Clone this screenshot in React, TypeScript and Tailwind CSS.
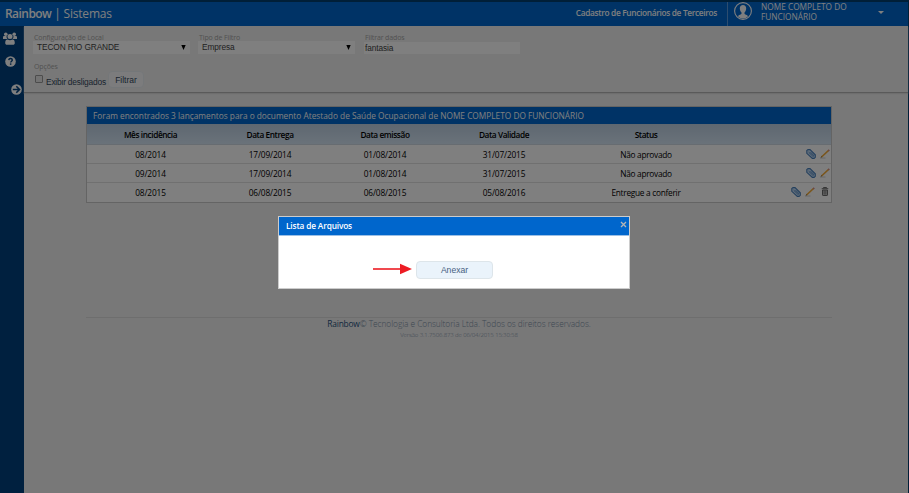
import React from "react";

const open = "font-['Open_Sans',sans-serif]";
const arial = "font-['Liberation_Sans',Arial,sans-serif]";
const label = "pl-[1px] text-[7px] leading-[10px] tracking-[-0.12px] text-[#a4a4a4]";

function UsersIcon() {
  return (
    <svg width="14" height="13" viewBox="0 0 14 13" fill="#fff" className="block">
      <circle cx="2.8" cy="2.2" r="1.8" />
      <circle cx="11.2" cy="2.2" r="1.8" />
      <path d="M0 7V5.2C0 4.3.6 4 1.2 4h2.4C3.4 5.4 3.800 6.300 4.600 7zM14 7V5.200C14 4.300 13.400 4 12.800 4h-2.400c.2 1.400-.2 2.300-1 3z" />
      <circle cx="7" cy="4.600" r="2.500" />
      <path d="M2.200 11c0-2.500.8-3.500 2.400-3.500.8.600 1.500.8 2.400.8s1.600-.2 2.400-.8c1.600 0 2.400 1 2.400 3.500 0 1.200-.7 1.800-1.800 1.800H4c-1.100 0-1.800-.6-1.800-1.800z" />
    </svg>
  );
}

function HelpIcon() {
  return (
    <svg width="11" height="11" viewBox="0 0 11 11" className="block">
      <circle cx="5.500" cy="5.500" r="5.300" fill="#fff" />
      <path d="M3.700 4.100C3.900 2.900 4.600 2.500 5.500 2.500c1 0 1.800.6 1.800 1.500 0 1.200-1.600 1.200-1.600 2.500" fill="none" stroke="#00407f" strokeWidth="1.400" />
      <rect x="4.900" y="7.400" width="1.500" height="1.400" fill="#00407f" />
    </svg>
  );
}

function ArrowIcon() {
  return (
    <svg width="11" height="11" viewBox="0 0 11 11" className="block">
      <circle cx="5.500" cy="5.500" r="5.300" fill="#fff" />
      <path d="M1.800 5.500h6.400M5.300 2.300l3.200 3.200-3.200 3.200" fill="none" stroke="#00407f" strokeWidth="1.600" />
    </svg>
  );
}

function UserIcon() {
  return (
    <svg width="18" height="18" viewBox="0 0 18 18" className="block shrink-0">
      <circle cx="9" cy="9" r="8.400" fill="none" stroke="#fff" strokeWidth="1.100" />
      <path d="M9 2.900c2 0 3.200 1.400 3.200 3.400 0 1.900-.8 3.300-1.700 4.100v1.400c0 .7 2.900 1.100 3.500 2.400-1.400 1.500-3 2.200-5 2.200s-3.600-.7-5-2.200c.6-1.300 3.500-1.700 3.500-2.400v-1.400C6.600 9.600 5.800 8.200 5.800 6.300c0-2 1.200-3.400 3.200-3.400z" fill="#fff" />
    </svg>
  );
}

function ClipIcon() {
  return (
    <svg width="10" height="10" viewBox="0 0 10 10" fill="none" className="block">
      <path d="M.8 3V1.500L2 .6h2l5.300 5.200v2.500L8.100 9.400H6.300L.8 4.300z" fill="#c2dbf5" stroke="#4a80bb" strokeWidth="1.100" />
      <path d="M2.700 3.200 6.600 7c.8.700 1.500-.1.900-.8L4.600 3.200" stroke="#4a80bb" strokeWidth=".9" />
    </svg>
  );
}

function PencilIcon() {
  return (
    <svg width="10" height="10" viewBox="0 0 10 10" className="block">
      <path d="M1 9h4.500" stroke="#c4c4c4" strokeWidth=".8" />
      <path d="M1.500 8 8.500 1.500" stroke="#f5ac38" strokeWidth="1.700" />
      <path d="m8.200 1.800 1.100-1" stroke="#d98a80" strokeWidth="1.600" />
      <path d="m.6 8.800 1.200-1.100" stroke="#6b5a3d" />
    </svg>
  );
}

function TrashIcon() {
  return (
    <svg width="8" height="9" viewBox="0 0 8 9" className="block">
      <path d="M2.500 1.200V.5h3v.7M.7 1.700h6.600" stroke="#5c5c5c" strokeWidth=".9" fill="none" />
      <path d="M1.500 3v4.900c0 .4.200.6.600.6h3.800c.4 0 .6-.2.600-.6V3z" fill="#c4c4c4" stroke="#5c5c5c" strokeWidth=".9" />
      <path d="M3.200 3.500v4M4.800 3.500v4" stroke="#6a6a6a" strokeWidth=".7" />
    </svg>
  );
}

function Select({ value }: { value: string }) {
  return (
    <div className={`${arial} flex h-[13px] w-[157px] items-center justify-between bg-white pl-1 pr-1 text-[8.3px] leading-[13px] tracking-[-0.1px] text-[#444]`}>
      <span>{value}</span>
      <svg width="5" height="5" viewBox="0 0 5 5"><path d="M.3 0h4.400L2.500 5z" fill="#000" /></svg>
    </div>
  );
}

const columns = "grid grid-cols-[127px_112px_118px_120px_164px_104px]";

const rows = [
  ["08/2014", "17/09/2014", "01/08/2014", "31/07/2015", "Não aprovado"],
  ["09/2014", "17/09/2014", "01/08/2014", "31/07/2015", "Não aprovado"],
  ["08/2015", "06/08/2015", "06/08/2015", "05/08/2016", "Entregue a conferir"],
];

export default function App() {
  return (
    <div className={`${open} relative h-[493px] w-[909px] overflow-hidden bg-[#f1f1f1]`}>
      <header className="flex h-[26px] border-t-2 border-r border-t-[#003e70] border-r-[#003e70] bg-[#0066cc] text-white">
        <div className="flex w-[560px] items-center pl-[5px] text-[12px] leading-5 tracking-[-0.2px] whitespace-pre">
          <span className="font-semibold tracking-[-0.55px]">Rainbow</span>
          <span> | </span>
          <span>Sistemas</span>
        </div>
        <div className="w-[167px] pr-[10px] text-right text-[8.3px] leading-[21px] font-semibold tracking-[-0.32px] whitespace-nowrap">
          Cadastro de Funcionários de Terceiros
        </div>
        <div className="flex flex-1 border-l border-[#5a9ade] pl-[6px]">
          <UserIcon />
          <div className="ml-[9px] w-[110px] text-[8.3px] leading-[10px]">NOME COMPLETO DO FUNCIONÁRIO</div>
          <svg width="6" height="3" viewBox="0 0 6 3" className="mt-[9px] ml-[7px]"><path d="M0 0h6L3 3z" fill="#fff" /></svg>
        </div>
      </header>

      <div className="flex h-[467px]">
        <aside className="w-6 bg-[#00407f]">
          <div className="pt-[6px] pl-[3px]"><UsersIcon /></div>
          <div className="pt-[11px] pl-[5px]"><HelpIcon /></div>
          <div className="pt-[17px] pl-[10.5px]"><ArrowIcon /></div>
        </aside>

        <main className="flex-1 border-r border-[#003e70]">
          <section className="h-[67px] border-b border-[#b5b5b5] pt-[7px] pl-[9px] shadow-[0_1px_1px_#ddd]">
            <div className="flex">
              <div className="w-[165px]">
                <div className={`${label} h-[8px]`}>Configuração de Local</div>
                <Select value="TECON RIO GRANDE" />
              </div>
              <div className="w-[166px]">
                <div className={`${label} h-[8px]`}>Tipo de Filtro</div>
                <Select value="Empresa" />
              </div>
              <div>
                <div className={`${label} h-[9px]`}>Filtrar dados</div>
                <div className={`${arial} h-3 w-[156px] bg-white pl-[1px] text-[8.3px] leading-[13px] tracking-[-0.1px] text-[#444]`}>fantasia</div>
              </div>
            </div>
            <div className={`${label} mt-[8px] h-[9px]`}>Opções</div>
            <div className={`${arial} flex items-start text-[#34495e]`}>
              <span className="mt-[4px] ml-[2px] size-2 rounded-[1px] border border-[#999] bg-[#e6e6e6]" />
              <span className="mt-[6px] ml-[3px] w-[62px] text-[8.4px] leading-[10px] tracking-[-0.2px] whitespace-nowrap">Exibir desligados</span>
              <span className="flex h-[17px] w-[36px] items-center justify-center rounded-[4px] border border-[#e9eef2] bg-[#f8f9fb] pt-px text-[8.5px]">Filtrar</span>
            </div>
          </section>

          <section className="mt-[13px] ml-[62px] w-[746px] border border-[#c8c8c8] bg-white">
            <h2 className="h-[17px] bg-[#0066cc] pl-[6px] text-[8.3px] leading-[17px] text-white">
              Foram encontrados 3 lançamentos para o documento Atestado de Saúde Ocupacional de NOME COMPLETO DO FUNCIONÁRIO
            </h2>
            <div className={`${columns} h-[21px] border-b border-[#cfd9e3] bg-linear-to-b from-[#bccfe2] to-[#d5e5f4] text-center text-[8.3px] leading-[21px] font-semibold tracking-[-0.42px] text-black`}>
              <span>Mês incidência</span>
              <span>Data Entrega</span>
              <span>Data emissão</span>
              <span>Data Validade</span>
              <span>Status</span>
            </div>
            {rows.map((row, i) => (
              <div key={i} className={`${columns} h-[19px] text-center text-[8.3px] leading-[19px] tracking-[-0.14px] text-black ${i < 2 ? "border-b border-[#e0e0e0]" : ""}`}>
                {row.map((cell, j) => <span key={j} className={j === 4 ? "tracking-[-0.27px]" : ""}>{cell}</span>)}
                <div className={`flex items-start justify-end gap-[4px] pt-[4px] ${i === 2 ? "pr-[3px]" : "pr-[2px]"}`}>
                  <ClipIcon />
                  <PencilIcon />
                  {i === 2 && <span className="pl-[2px]"><TrashIcon /></span>}
                </div>
              </div>
            ))}
          </section>

          <footer className="mt-[114px] ml-[62px] w-[746px] border-t border-[#dcdcdc] text-center text-[8.4px] leading-[12px] font-light text-[#7c90a5]">
            <div className="tracking-[-0.06px]"><span className="font-normal tracking-[-0.2px] text-[#24507c]">Rainbow</span>© Tecnologia e Consultoria Ltda. Todos os direitos reservados.</div>
            <div className="text-[6px] leading-[11px] tracking-[-0.1px]">Versão 3.1.7506.873 de 06/04/2015 15:30:58</div>
          </footer>
        </main>
      </div>

      <div className="absolute inset-0 bg-black/50" />

      <div className="absolute top-[216px] left-[278px] h-[73px] w-[352px] border border-[#ccc] bg-white">
        <div className="flex h-[19px] justify-between border-b border-[#9bbfe5] bg-[#0066cc] pr-[2px] pl-[7px] text-[8.3px] leading-[18px] font-semibold tracking-[-0.15px] text-white">
          <span>Lista de Arquivos</span>
          <svg width="7" height="7" viewBox="0 0 7 7" className="mt-1"><path d="m1 1 5 5m0-5L1 6" stroke="#b5b5b5" strokeWidth="1.300" /></svg>
        </div>
        <div className="flex items-center pt-[25px] pl-[94px]">
          <svg width="39" height="12" viewBox="0 0 39 12" className="mb-[2px]"><path d="M0 6h28" stroke="#ed1c24" strokeWidth="1.600" /><path d="M27 .8 39 6l-12 5.200z" fill="#ed1c24" /></svg>
          <div className={`${arial} ml-1 flex h-[18px] w-[77px] items-center justify-center rounded-[4px] border border-[#dde5ea] bg-[#eaf3fb] text-[8.600px] text-[#466080]`}>Anexar</div>
        </div>
      </div>
    </div>
  );
}
